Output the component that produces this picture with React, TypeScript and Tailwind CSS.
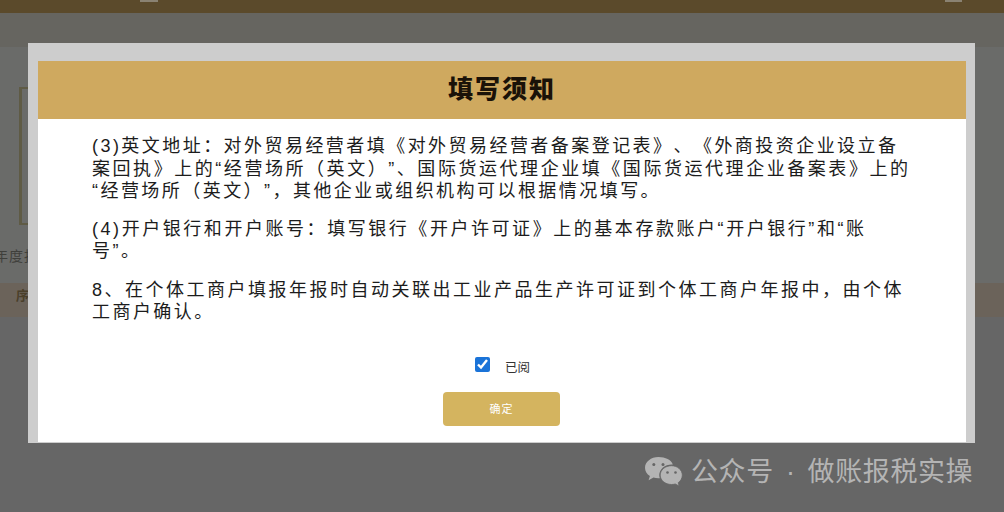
const bodyFont = '[font-family:"Liberation_Sans","Noto_Sans_CJK_SC",sans-serif]'

function WeChatIcon() {
  return (
    <svg width="40" height="32" viewBox="0 0 40 32" fill="#b4b4b4">
      <path d="M14.5 1C7 1 1 5.8 1 11.8c0 3.4 1.900 6.300 4.900 8.300L4.600 24.200l4.900-2.600c1.500.4 3.100.7 4.800.7.500 0 1 0 1.500-.1-.3-1-.5-2-.5-3.100 0-6 5.600-10.700 12.500-10.700h1C27.300 3.800 21.400 1 14.500 1z" />
      <circle cx="9.800" cy="8.500" r="1.500" fill="#666" />
      <circle cx="19" cy="8.500" r="1.500" fill="#666" />
      <path d="M27.500 9.700c-6.300 0-11.300 4.200-11.300 9.400s5 9.400 11.300 9.400c1.300 0 2.600-.2 3.800-.5l3.900 2.100-1-3.400c2.500-1.700 4.100-4.400 4.100-7.600 0-5.200-4.900-9.400-10.800-9.400z" stroke="#666" strokeWidth="0.8" />
      <circle cx="23.500" cy="16.500" r="1.300" fill="#666" />
      <circle cx="31.500" cy="16.500" r="1.300" fill="#666" />
    </svg>
  )
}

function Backdrop() {
  return (
    <div className="w-[1004px] h-[512px] flex flex-col bg-[#676767]">
      <div className="h-[13px] flex items-start justify-between pl-[140px] pr-[42px] bg-[#5b4a2b]">
        <div className="w-[18px] h-[2px] bg-[#8a8272]" />
        <div className="w-[17px] h-[2px] bg-[#8a8272]" />
      </div>
      <div className="h-[34px] bg-[#666560]" />
      <div className="flex-1 flex flex-col bg-[#6a6b69] pt-10">
        <div className="ml-[19px] h-[138px] w-[10px] border-l-[3px] border-y-2 border-[#5f5b45]" />
        <div className="mt-5 -ml-[6px] h-[20px] text-[14px] leading-[20px] tracking-[1px] text-[#3f3f3b] font-['Noto_Sans_CJK_SC',sans-serif]">年度报</div>
        <div className="mt-[18px] h-[34px] pl-4 bg-[#6b635a] text-[13px] leading-[24px] font-bold text-[#4a3f2a] font-['Noto_Sans_CJK_SC',sans-serif]">序</div>
        <div className="flex-1 bg-[#666666]" />
      </div>
    </div>
  )
}

export default function App() {
  const lineClass = 'h-[22.5px] leading-[22.5px] whitespace-nowrap'
  return (
    <div className="relative w-[1004px] h-[512px] overflow-hidden">
      <Backdrop />

      <div className="absolute left-[28px] top-[43px] w-[947px] h-[400px] bg-[#cdcdcd] pt-[18px] pl-[10px] pr-[9px] pb-px">
        <div className="h-full flex flex-col bg-white">
          <div className="h-[58px] shrink-0 flex justify-center bg-[#cfa95f]">
            <h2 className="mt-[8px] text-[25px] leading-[36px] font-black tracking-[2px] text-[#1a1208] font-['Noto_Sans_CJK_SC',sans-serif]">填写须知</h2>
          </div>

          <div className={`pl-[54px] pt-[16px] text-[18px] tracking-[2.45px] text-[#1c1c1c] [text-spacing-trim:space-all] ${bodyFont}`}>
            <div className={lineClass}>(3)英文地址：对外贸易经营者填《对外贸易经营者备案登记表》、《外商投资企业设立备</div>
            <div className={`${lineClass} tracking-[2.55px]`}>案回执》上的“经营场所（英文）”、国际货运代理企业填《国际货运代理企业备案表》上的</div>
            <div className={lineClass}>“经营场所（英文）”，其他企业或组织机构可以根据情况填写。</div>

            <div className={`${lineClass} mt-[15px] tracking-[2.55px]`}>(4)开户银行和开户账号：填写银行《开户许可证》上的基本存款账户“开户银行”和“账</div>
            <div className={lineClass}>号”。</div>

            <div className={`${lineClass} mt-[16px] tracking-[2.5px]`}>8、在个体工商户填报年报时自动关联出工业产品生产许可证到个体工商户年报中，由个体</div>
            <div className={lineClass}>工商户确认。</div>
          </div>

          <label className="mt-[32px] ml-[437px] flex items-center gap-[15px] h-[18px]">
            <input type="checkbox" defaultChecked className="w-[15px] h-[15px] m-0 accent-[#1a73d8]" />
            <span className="text-[12.500px] mt-[6px] text-[#333] font-['Noto_Sans_CJK_SC',sans-serif]">已阅</span>
          </label>

          <button className="mt-[18px] ml-[405px] w-[117px] h-[34px] rounded-[4px] bg-[#d4b45f] text-[11px] tracking-[1px] text-white font-['Noto_Sans_CJK_SC',sans-serif]">
            确定
          </button>
        </div>
      </div>

      <div className="absolute left-[644px] top-[455px] flex items-center gap-[7px]">
        <WeChatIcon />
        <span className={`text-[27px] leading-[34px] tracking-[0.6px] [word-spacing:4px] text-[#b4b4b4] whitespace-nowrap ${bodyFont}`}>公众号 · 做账报税实操</span>
      </div>
    </div>
  )
}
